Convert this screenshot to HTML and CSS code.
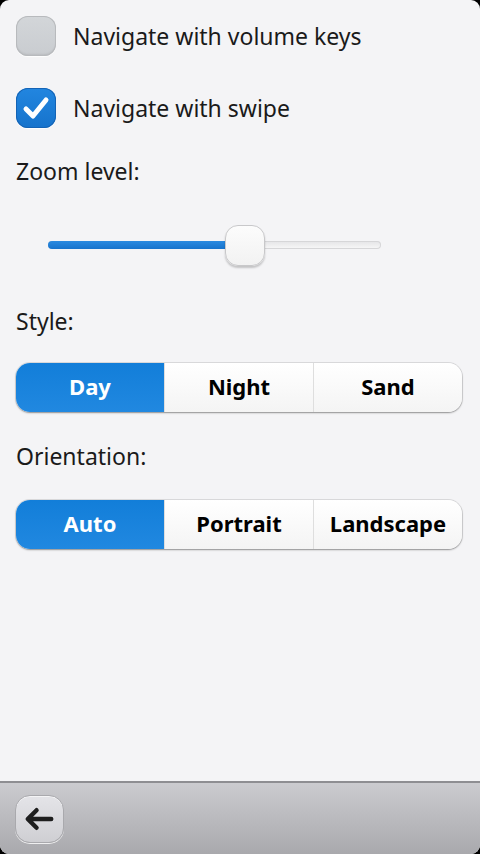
FILE: index.html
```html
<!DOCTYPE html>
<html>
<head>
<meta charset="utf-8">
<link rel="stylesheet" href="styles.css">
</head>
<body>
<div class="screen">
  <div class="content">
    <div class="check-row">
      <span class="checkbox"></span>
      <span class="check-label">Navigate with volume keys</span>
    </div>
    <div class="check-row second">
      <span class="checkbox checked">
        <svg viewBox="0 0 40 40" width="40" height="40"><path d="M10 21 L17 28 L30 12" fill="none" stroke="#fff" stroke-width="5" stroke-linecap="round" stroke-linejoin="round"/></svg>
      </span>
      <span class="check-label">Navigate with swipe</span>
    </div>
    <div class="label zoom-label">Zoom level:</div>
    <div class="slider">
      <div class="track">
        <div class="fill" style="width:182px"></div>
        <div class="knob" style="left:177px"></div>
      </div>
    </div>
    <div class="label style-label">Style:</div>
    <div class="segmented">
      <div class="seg active">Day</div>
      <div class="seg">Night</div>
      <div class="seg">Sand</div>
    </div>
    <div class="label orient-label">Orientation:</div>
    <div class="segmented">
      <div class="seg active">Auto</div>
      <div class="seg">Portrait</div>
      <div class="seg">Landscape</div>
    </div>
  </div>
  <div class="toolbar">
    <div class="back">
      <svg viewBox="0 0 48 48" width="48" height="48"><path d="M36 24 H13 M21 15 L12 24 L21 33" fill="none" stroke="#1e1e1e" stroke-width="4.5" stroke-linecap="round" stroke-linejoin="round"/></svg>
    </div>
  </div>
</div>
</body>
</html>
```
FILE: styles.css
```css
html, body {
  margin: 0;
  padding: 0;
  background: #000;
}
.screen {
  width: 480px;
  height: 854px;
  border-radius: 9px;
  overflow: hidden;
  background: #f4f4f6;
  display: flex;
  flex-direction: column;
  font-family: "Noto Sans", "Open Sans", sans-serif;
  color: #1a1a1a;
}
.content {
  flex: 1;
  padding: 16px 16px 0 16px;
}
.check-row {
  display: flex;
  align-items: center;
  gap: 17px;
  height: 40px;
}
.check-row.second {
  margin-top: 32px;
}
.checkbox {
  width: 40px;
  height: 40px;
  border-radius: 12px;
  box-sizing: border-box;
  background: linear-gradient(#d3d6d9, #c9ccd0);
  box-shadow: inset 0 0 0 1px #b8babd, inset 0 -2px 2px rgba(0,0,0,0.08), 0 1px 1px rgba(255,255,255,0.9);
  flex: none;
  display: flex;
}
.checkbox.checked {
  background: linear-gradient(#2286e0, #1673cc);
  box-shadow: inset 0 0 0 1px #1463b5, 0 1px 1px rgba(255,255,255,0.9);
}
.check-label {
  font-size: 23px;
  line-height: 40px;
}
.label {
  font-size: 23px;
  line-height: 30px;
}
.zoom-label { margin-top: 28px; }
.slider {
  height: 118px;
  display: flex;
  align-items: center;
  padding-left: 32px;
}
.track {
  position: relative;
  width: 333px;
  height: 8px;
  border-radius: 4px;
  background: linear-gradient(#e4e4e6, #f8f8f8);
  box-shadow: inset 0 0 0 1px #d6d6d8;
}
.fill {
  height: 8px;
  border-radius: 4px;
  background: linear-gradient(#2a8ae0, #1673cc);
}
.knob {
  position: absolute;
  top: -16px;
  width: 40px;
  height: 41px;
  border-radius: 13px;
  box-sizing: border-box;
  background: linear-gradient(#fcfcfc, #f2f2f2);
  border: 1px solid #c8c8ca;
  box-shadow: 0 2px 2px rgba(0,0,0,0.2);
}
.style-label { margin-top: 2px; }
.segmented {
  margin-top: 27px;
  display: flex;
  width: 446px;
  height: 49px;
  border-radius: 14px;
  overflow: hidden;
  box-shadow: 0 1px 2px rgba(0,0,0,0.35), 0 0 0 1px #dcdcde;
  background: linear-gradient(#ffffff, #f4f4f4);
}
.seg {
  flex: 1;
  display: flex;
  align-items: center;
  justify-content: center;
  font-weight: 700;
  font-size: 22px;
  color: #000;
  border-left: 1px solid #dedede;
  padding-bottom: 4px;
}
.seg:first-child { border-left: none; }
.seg.active {
  background: linear-gradient(#127ed9, #2188e0);
  color: #fff;
}
.orient-label { margin-top: 29px; }
.orient-label + .segmented { margin-top: 29px; }
.toolbar {
  height: 71px;
  border-top: 2px solid #8e8e92;
  background: linear-gradient(#cbcbcf, #a9a9ad);
  display: flex;
  align-items: center;
  padding-left: 15px;
}
.back {
  width: 49px;
  height: 48px;
  border-radius: 15px;
  box-sizing: border-box;
  border: 1px solid #a9a9ad;
  box-shadow: inset 0 1px 0 rgba(255,255,255,0.6), 0 1px 0 rgba(255,255,255,0.8);
  background: linear-gradient(#e4e4e8, #cfcfd3);
  display: flex;
  align-items: center;
  justify-content: center;
}
```
